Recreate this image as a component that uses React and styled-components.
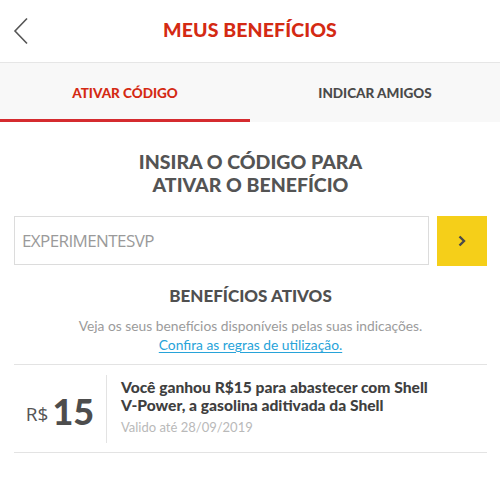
import React from 'react';
import styled, { createGlobalStyle } from 'styled-components';

const GlobalStyle = createGlobalStyle`
  body {
    margin: 0;
    background: #fff;
    font-family: Lato, "Open Sans", sans-serif;
  }
`;

const Page = styled.div`
  width: 500px;
  height: 481px;
  overflow: hidden;
  background: #fff;
`;

const Header = styled.header`
  height: 62px;
  border-bottom: 1px solid #e6e6e6;
  display: grid;
  grid-template-columns: 50px 1fr 50px;
  align-items: center;
`;

const BackButton = styled.button`
  border: none;
  background: none;
  padding: 0 0 0 12px;
  height: 100%;
  display: flex;
  align-items: center;
  cursor: pointer;
`;

const Title = styled.h1`
  margin: 0;
  text-align: center;
  font-size: 19.5px;
  font-weight: 900;
  color: #d42a13;
  letter-spacing: 0.1px;
  padding-bottom: 4px;
`;

const Tabs = styled.nav`
  display: flex;
  height: 59px;
  background: #f8f8f8;
`;

const Tab = styled.div`
  flex: 1;
  display: flex;
  align-items: center;
  justify-content: center;
  font-size: 13.5px;
  font-weight: 900;
  color: ${p => (p.$active ? '#d42a13' : '#4a4a4a')};
  box-shadow: ${p => (p.$active ? 'inset 0 -3px 0 #d52b2f' : 'none')};
  padding-top: 1px;
`;

const Content = styled.main`
  background: #fff;
  padding: 28px 13px 0 14px;
  display: flex;
  flex-direction: column;
  align-items: center;
`;

const Heading = styled.h2`
  margin: 0;
  text-align: center;
  font-size: 19.5px;
  line-height: 23px;
  font-weight: 900;
  color: #545454;
`;

const CodeRow = styled.div`
  align-self: stretch;
  display: flex;
  gap: 8px;
  margin-top: 20px;
`;

const CodeInput = styled.input`
  flex: 1;
  height: 49px;
  box-sizing: border-box;
  border: 1px solid #dcdcdc;
  padding: 0 7px;
  font-family: "Open Sans", Lato, sans-serif;
  font-size: 17px;
  letter-spacing: -0.6px;
  color: #444;
  outline: none;
  &::placeholder {
    color: #9a9a9a;
  }
`;

const GoButton = styled.button`
  width: 50px;
  height: 50px;
  border: none;
  background: #f5cf19;
  display: flex;
  align-items: center;
  justify-content: center;
  cursor: pointer;
`;

const SectionTitle = styled.h3`
  margin: 19px 0 0;
  font-size: 17px;
  font-weight: 900;
  color: #505050;
`;

const Lead = styled.p`
  margin: 11px 0 0;
  font-size: 13.8px;
  color: #9b9b9b;
  text-align: center;
`;

const RulesLink = styled.a`
  margin-top: 2px;
  font-size: 13.8px;
  color: #27a3d9;
  text-decoration: underline;
  text-underline-offset: 2px;
  cursor: pointer;
`;

const BenefitCard = styled.div`
  align-self: stretch;
  margin-top: 11px;
  border-top: 1px solid #e3e3e3;
  border-bottom: 1px solid #e3e3e3;
  padding: 10px 0 9px;
  display: flex;
  align-items: stretch;
`;

const Amount = styled.div`
  width: 92px;
  border-right: 1px solid #e3e3e3;
  display: flex;
  align-items: center;
  justify-content: center;
  gap: 4px;
  color: #4f4f4f;
  padding-top: 4px;
`;

const Currency = styled.span`
  font-family: "Open Sans", sans-serif;
  font-size: 19px;
  color: #555;
  margin-top: 6px;
`;

const Value = styled.span`
  font-size: 36px;
  font-weight: 900;
  line-height: 1;
  color: #4d4d4d;
`;

const BenefitInfo = styled.div`
  padding: 3px 0 8px 14px;
`;

const BenefitText = styled.p`
  margin: 0;
  font-size: 15.6px;
  line-height: 18px;
  font-weight: 900;
  color: #3f3f3f;
`;

const Validity = styled.p`
  margin: 5px 0 0;
  font-size: 13px;
  color: #b9b9b9;
`;

const ChevronLeft = () => (
  <svg width="18" height="28" viewBox="0 0 18 28" fill="none">
    <path d="M15 1.5 L3 14 L15 26.5" stroke="#555" strokeWidth="1.6" />
  </svg>
);

const ChevronRight = () => (
  <svg width="10" height="12" viewBox="0 0 10 12" fill="none">
    <path d="M2.5 1.5 L7 6 L2.5 10.5" stroke="#4a4a4a" strokeWidth="2.4" />
  </svg>
);

export default function App() {
  return (
    <Page>
      <GlobalStyle />
      <Header>
        <BackButton aria-label="Voltar">
          <ChevronLeft />
        </BackButton>
        <Title>MEUS BENEFÍCIOS</Title>
        <span />
      </Header>
      <Tabs>
        <Tab $active>ATIVAR CÓDIGO</Tab>
        <Tab>INDICAR AMIGOS</Tab>
      </Tabs>
      <Content>
        <Heading>
          INSIRA O CÓDIGO PARA
          <br />
          ATIVAR O BENEFÍCIO
        </Heading>
        <CodeRow>
          <CodeInput placeholder="EXPERIMENTESVP" />
          <GoButton aria-label="Ativar">
            <ChevronRight />
          </GoButton>
        </CodeRow>
        <SectionTitle>BENEFÍCIOS ATIVOS</SectionTitle>
        <Lead>Veja os seus benefícios disponíveis pelas suas indicações.</Lead>
        <RulesLink>Confira as regras de utilização.</RulesLink>
        <BenefitCard>
          <Amount>
            <Currency>R$</Currency>
            <Value>15</Value>
          </Amount>
          <BenefitInfo>
            <BenefitText>
              Você ganhou R$15 para abastecer com Shell
              <br />
              V-Power, a gasolina aditivada da Shell
            </BenefitText>
            <Validity>Valido até 28/09/2019</Validity>
          </BenefitInfo>
        </BenefitCard>
      </Content>
    </Page>
  );
}
